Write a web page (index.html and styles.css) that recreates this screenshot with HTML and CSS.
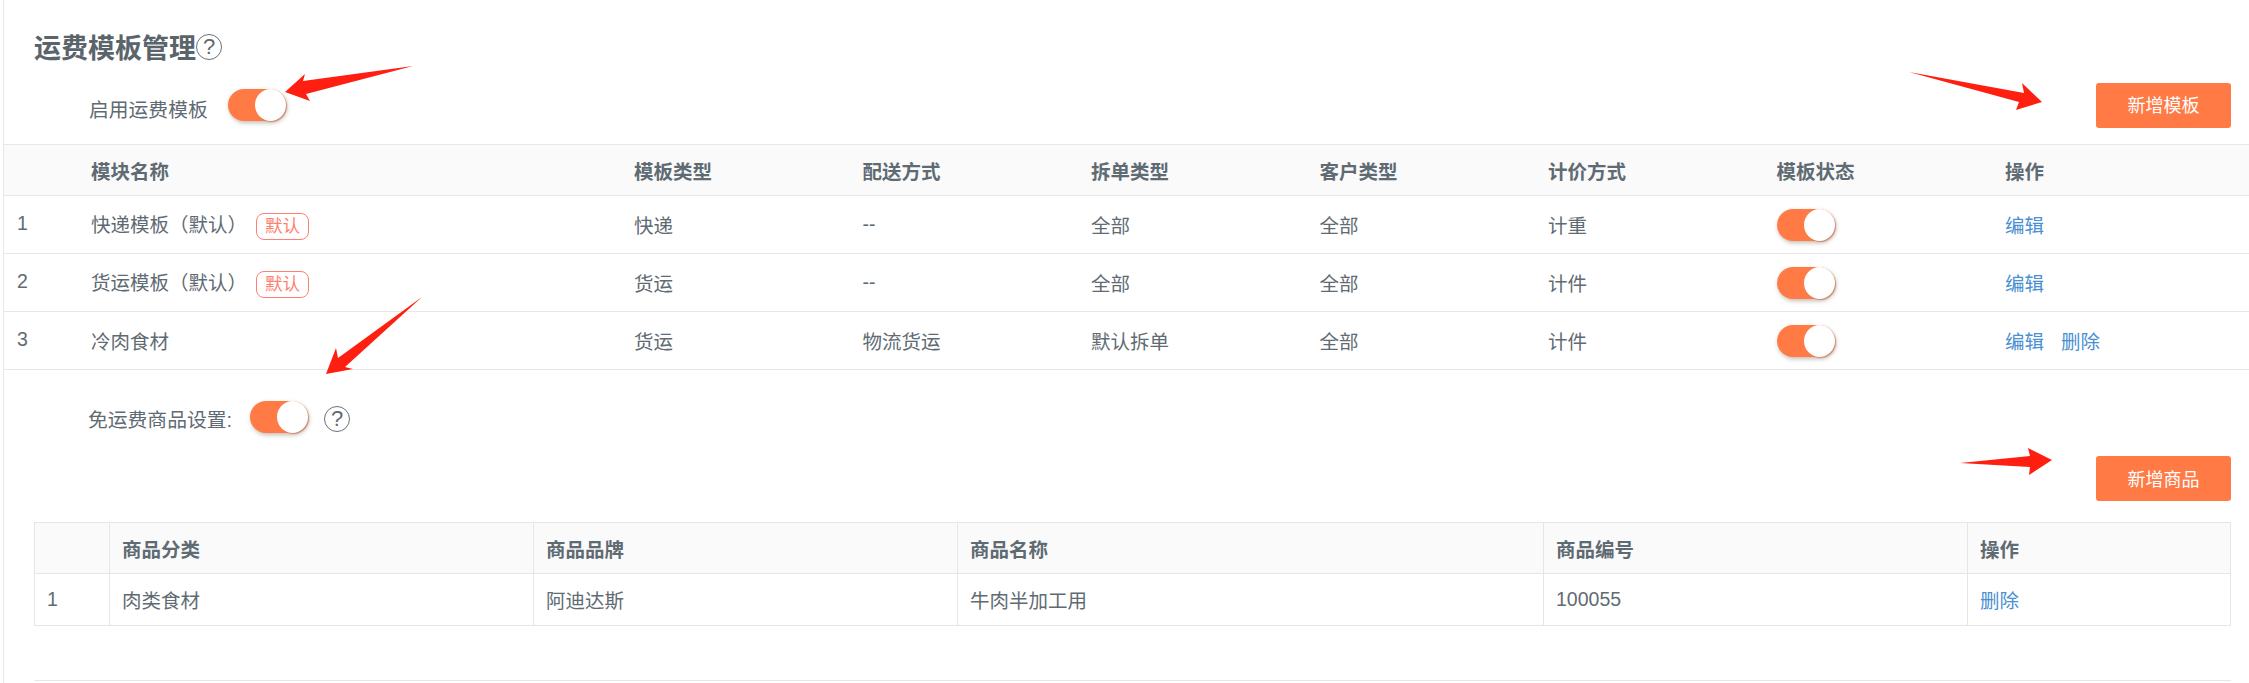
FILE: index.html
```html
<!DOCTYPE html>
<html lang="zh-CN">
<head>
<meta charset="utf-8">
<title>运费模板管理</title>
<link rel="stylesheet" href="styles.css">
</head>
<body>
<div class="page">
  <div class="title-row">
    <h1 class="title">运费模板管理</h1>
    <span class="help help-title">?</span>
  </div>
  <div class="enable-row">
    <span class="field-label enable-label">启用运费模板</span>
    <span class="switch"><span class="knob"></span></span>
    <button class="btn">新增模板</button>
  </div>
  <table class="tpl-table">
    <colgroup>
      <col class="c-num"><col class="c-name"><col class="c-std"><col class="c-std"><col class="c-std"><col class="c-std"><col class="c-std"><col class="c-std"><col>
    </colgroup>
    <thead>
      <tr><th></th><th>模块名称</th><th>模板类型</th><th>配送方式</th><th>拆单类型</th><th>客户类型</th><th>计价方式</th><th>模板状态</th><th>操作</th></tr>
    </thead>
    <tbody>
      <tr><td class="num">1</td><td>快递模板（默认）<span class="badge">默认</span></td><td>快递</td><td>--</td><td>全部</td><td>全部</td><td>计重</td><td><span class="switch"><span class="knob"></span></span></td><td><a class="link">编辑</a></td></tr>
      <tr><td class="num">2</td><td>货运模板（默认）<span class="badge">默认</span></td><td>货运</td><td>--</td><td>全部</td><td>全部</td><td>计件</td><td><span class="switch"><span class="knob"></span></span></td><td><a class="link">编辑</a></td></tr>
      <tr><td class="num">3</td><td>冷肉食材</td><td>货运</td><td>物流货运</td><td>默认拆单</td><td>全部</td><td>计件</td><td><span class="switch"><span class="knob"></span></span></td><td><a class="link">编辑</a><a class="link link-next">删除</a></td></tr>
    </tbody>
  </table>
  <div class="free-row">
    <span class="field-label free-label">免运费商品设置:</span>
    <span class="switch"><span class="knob"></span></span>
    <span class="help help-free">?</span>
  </div>
  <div class="action-row"><button class="btn">新增商品</button></div>
  <table class="goods-table">
    <colgroup>
      <col class="g-num"><col class="g-a"><col class="g-a"><col class="g-c"><col class="g-a"><col>
    </colgroup>
    <thead>
      <tr><th></th><th>商品分类</th><th>商品品牌</th><th>商品名称</th><th>商品编号</th><th>操作</th></tr>
    </thead>
    <tbody>
      <tr><td>1</td><td>肉类食材</td><td>阿迪达斯</td><td>牛肉半加工用</td><td>100055</td><td><a class="link">删除</a></td></tr>
    </tbody>
  </table>
  <div class="bottom-line"></div>
</div>
<svg class="arrows" width="2249" height="683" viewBox="0 0 2249 683" aria-hidden="true">
  <polygon points="413,66 303,81 305,74 285,92 310,101 306,94"/>
  <polygon points="1909,72 2024,93 2022,83 2042,102 2016,110 2019,102"/>
  <polygon points="422,297 338,358 336,348 326,374 353,369 345,367"/>
  <polygon points="1960,463 2030,456 2028,448 2052,460 2029,475 2030,467"/>
</svg>
</body>
</html>
```
FILE: styles.css
```css
* { box-sizing: border-box; }
html, body { margin: 0; padding: 0; background: #fff; }
body {
  width: 2249px;
  height: 683px;
  overflow: hidden;
  position: relative;
  font-family: "Liberation Sans", "Noto Sans CJK SC", sans-serif;
  font-size: 19.5px;
  color: #5f6b73;
}
.page {
  margin-left: 3px;
  height: 683px;
  border-left: 1px solid #e6e8ea;
}
.title-row {
  display: flex;
  align-items: center;
  height: 66px;
  padding: 33px 0 0 30px;
}
.title {
  margin: 0;
  font-size: 27px;
  font-weight: 700;
  line-height: 33px;
  color: #5a646b;
}
.help {
  display: flex;
  align-items: center;
  justify-content: center;
  width: 26px;
  height: 26px;
  border: 1.5px solid #66727a;
  border-radius: 50%;
  font-size: 22px;
  line-height: 1;
  color: #5f6b73;
}
.help-title { margin-top: -6px; }
.help-free { margin-left: 16px; margin-top: 11px; }
.enable-row {
  display: flex;
  align-items: center;
  height: 78px;
  padding: 0 18px 0 85px;
}
.field-label { font-size: 19.8px; line-height: 28px; }
.enable-label { width: 139px; margin-top: 9px; }
.enable-row .switch { margin-top: -1px; }
.enable-row .btn { margin-left: auto; }
.switch {
  display: inline-flex;
  justify-content: flex-end;
  width: 58px;
  height: 32px;
  border-radius: 16px;
  background: #ff7a45;
  box-shadow: 1px 2px 4px rgba(90, 60, 40, 0.35);
  vertical-align: middle;
}
.knob {
  width: 31px;
  height: 32px;
  border-radius: 50%;
  background: #fff;
  box-shadow: 1px 1px 1px rgba(200, 110, 70, 0.7);
}
.btn {
  width: 135px;
  height: 45px;
  padding: 0 0 2px;
  border: 0;
  border-radius: 3px;
  background: #ff7a45;
  color: #fff;
  font: inherit;
  font-size: 18px;
}
table {
  border-collapse: collapse;
  table-layout: fixed;
}
th {
  text-align: left;
  font-weight: 700;
  background: #fafafa;
}
.tpl-table { width: 2245px; }
.tpl-table th, .tpl-table td {
  padding: 0;
  border-top: 1px solid #e4e8ea;
  border-bottom: 1px solid #e4e8ea;
}
.tpl-table th { height: 51px; }
.tpl-table td { height: 58px; }
.tpl-table .num { padding: 0 0 3px 13px; }
.c-num { width: 87px; }
.c-name { width: 543px; }
.c-std { width: 228.5px; }
.badge {
  display: inline-block;
  margin: 1px 0 0 9px;
  width: 53px;
  height: 27px;
  border: 1px solid #ff7f70;
  border-radius: 8px;
  color: #ff7f70;
  font-size: 17.5px;
  line-height: 25px;
  text-align: center;
  vertical-align: middle;
}
.link { color: #4a90d2; }
.link-next { margin-left: 17px; }
.free-row {
  display: flex;
  align-items: center;
  height: 86px;
  padding: 0 0 0 84px;
}
.free-label { width: 162px; margin-top: 13px; }
.free-row .switch { margin-top: 7px; }
.action-row {
  display: flex;
  justify-content: flex-end;
  padding-right: 18px;
}
.goods-table {
  width: 2197px;
  margin: 21px 0 0 30px;
}
.goods-table th, .goods-table td {
  padding: 0 0 0 12px;
  border: 1px solid #e2e7e9;
}
.goods-table th { height: 51px; }
.goods-table td { height: 52px; }
.g-num { width: 75px; }
.g-a { width: 424px; }
.g-c { width: 586px; }
.bottom-line {
  margin: 54px 18px 0 30px;
  border-top: 1px solid #e4e8ea;
}
.arrows {
  position: absolute;
  left: 0;
  top: 0;
  pointer-events: none;
}
.arrows polygon { fill: #ff1f10; }
```
